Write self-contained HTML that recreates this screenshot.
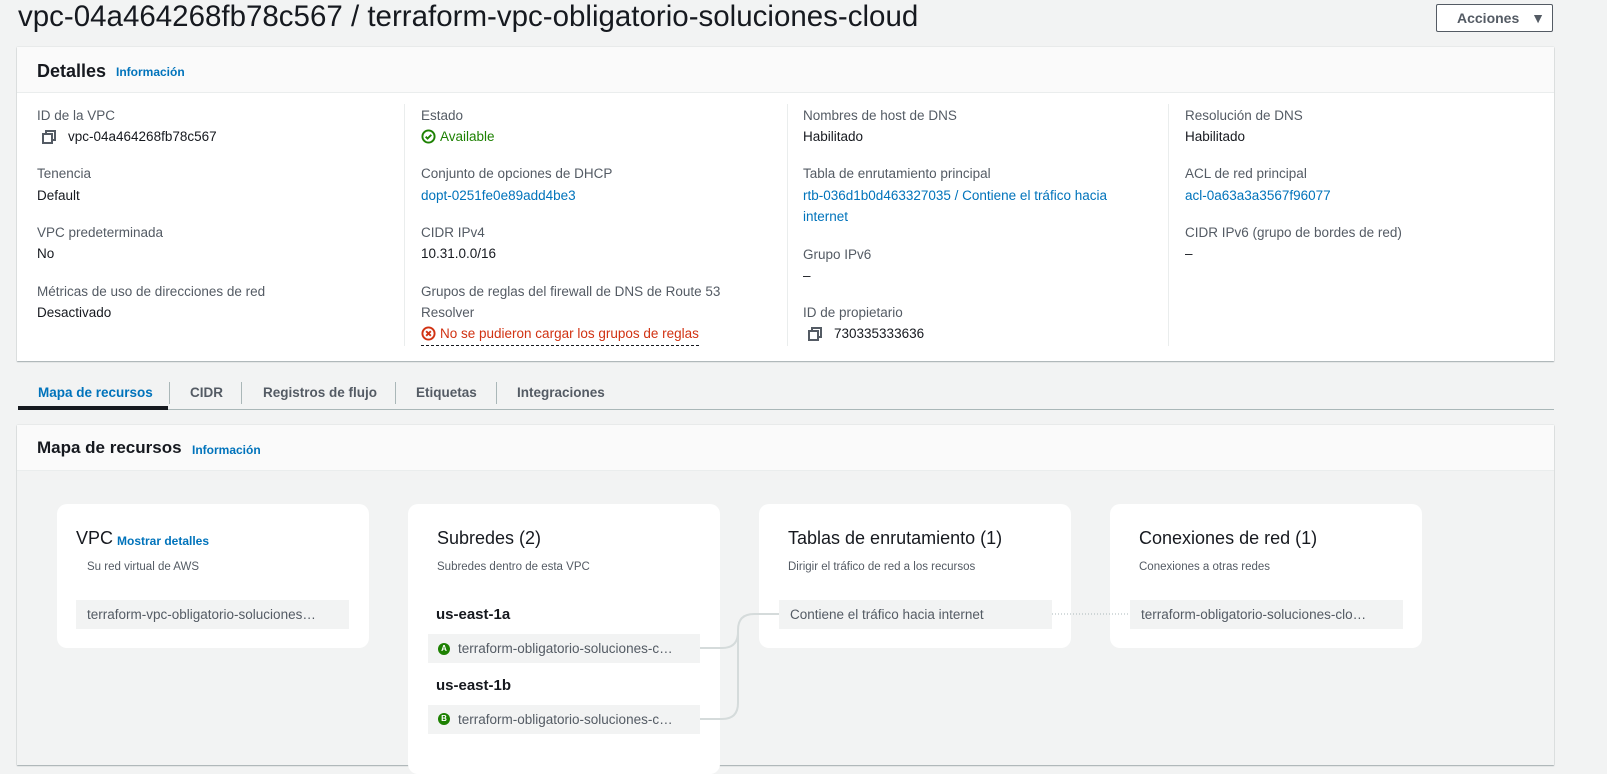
<!DOCTYPE html>
<html><head><meta charset="utf-8"><style>
*{margin:0;padding:0;box-sizing:border-box}
body{width:1607px;height:759px;overflow:hidden;background:#f2f3f3;font-family:"Liberation Sans",sans-serif;color:#16191f;position:relative}
.t{position:absolute;white-space:nowrap;font-size:13.5px;line-height:18px}
.l{color:#545b64}
.a{color:#0073bb}
.b{font-weight:bold}
.card{position:absolute;background:#fff;box-shadow:0 1px 1px rgba(0,28,36,.3),0 0 1px rgba(0,28,36,.2)}
.hd{position:absolute;left:0;right:0;top:0;height:46px;background:#fafafa;border-bottom:1px solid #eaeded}
.vd{position:absolute;width:1px;background:#eaeded;top:57px;height:242px}
.mc{position:absolute;background:#fff;border-radius:10px}
.pill{position:absolute;background:#f2f3f3;height:29px;font-size:13.5px;line-height:29px;color:#16191f;white-space:nowrap;overflow:hidden;padding-left:11px}
</style></head><body>
<div class="t" style="left:18px;top:0px;font-size:29.5px;line-height:34px;color:#16191f">vpc-04a464268fb78c567 / terraform-vpc-obligatorio-soluciones-cloud</div>
<div style="position:absolute;left:1436px;top:4px;width:117px;height:28px;border:1px solid #545b64;border-radius:2px;background:#fff;font-size:14px;font-weight:bold;color:#545b64;line-height:26px;padding-left:20px">Acciones <span style="font-size:14px;margin-left:8px">&#9660;</span></div>

<div class="card" style="left:17px;top:47px;width:1537px;height:314px">
 <div class="hd"></div>
 <div class="t b" style="left:20px;top:13px;font-size:18px;line-height:22px">Detalles</div>
 <div class="t a b" style="left:99px;top:16px;font-size:12px">Información</div>
 <div class="vd" style="left:387px"></div><div class="vd" style="left:770px"></div><div class="vd" style="left:1151px"></div>
</div>
<svg style="position:absolute;left:42px;top:130px" width="14" height="14" viewBox="0 0 14 14" fill="none" stroke="#545b64" stroke-width="2"><rect x="1" y="4" width="9" height="9"/><path d="M4 4V1h9v9h-3"/></svg>
<svg style="position:absolute;left:808px;top:327px" width="14" height="14" viewBox="0 0 14 14" fill="none" stroke="#545b64" stroke-width="2"><rect x="1" y="4" width="9" height="9"/><path d="M4 4V1h9v9h-3"/></svg>
<div class="t l" style="left:37px;top:107px">ID de la VPC</div>
<div class="t" style="left:68px;top:128px">vpc-04a464268fb78c567</div>
<div class="t l" style="left:37px;top:165px">Tenencia</div>
<div class="t" style="left:37px;top:187px">Default</div>
<div class="t l" style="left:37px;top:224px">VPC predeterminada</div>
<div class="t" style="left:37px;top:245px">No</div>
<div class="t l" style="left:37px;top:283px">Métricas de uso de direcciones de red</div>
<div class="t" style="left:37px;top:304px">Desactivado</div>

<div class="t l" style="left:421px;top:107px">Estado</div>
<svg style="position:absolute;left:421px;top:129px" width="15" height="15" viewBox="0 0 16 16" fill="none" stroke="#1d8102" stroke-width="2"><circle cx="8" cy="8" r="6.5"/><path d="M5 8.2l2 2 4-4"/></svg>
<div class="t" style="left:440px;top:128px;color:#1d8102">Available</div>
<div class="t l" style="left:421px;top:165px">Conjunto de opciones de DHCP</div>
<div class="t a" style="left:421px;top:187px">dopt-0251fe0e89add4be3</div>
<div class="t l" style="left:421px;top:224px">CIDR IPv4</div>
<div class="t" style="left:421px;top:245px">10.31.0.0/16</div>
<div class="t l" style="left:421px;top:283px">Grupos de reglas del firewall de DNS de Route 53</div>
<div class="t l" style="left:421px;top:304px">Resolver</div>
<div class="t" style="left:421px;top:325px;color:#d13212;border-bottom:1px dashed #16191f;padding-bottom:2px;padding-left:19px">No se pudieron cargar los grupos de reglas</div>
<svg style="position:absolute;left:421px;top:326px" width="15" height="15" viewBox="0 0 16 16" fill="none" stroke="#d13212" stroke-width="2"><circle cx="8" cy="8" r="6.5"/><path d="M5.5 5.5l5 5M10.5 5.5l-5 5"/></svg>

<div class="t l" style="left:803px;top:107px">Nombres de host de DNS</div>
<div class="t" style="left:803px;top:128px">Habilitado</div>
<div class="t l" style="left:803px;top:165px">Tabla de enrutamiento principal</div>
<div class="t a" style="left:803px;top:187px">rtb-036d1b0d463327035 / Contiene el tráfico hacia</div>
<div class="t a" style="left:803px;top:208px">internet</div>
<div class="t l" style="left:803px;top:246px">Grupo IPv6</div>
<div class="t" style="left:803px;top:267px">–</div>
<div class="t l" style="left:803px;top:304px">ID de propietario</div>
<div class="t" style="left:834px;top:325px">730335333636</div>

<div class="t l" style="left:1185px;top:107px">Resolución de DNS</div>
<div class="t" style="left:1185px;top:128px">Habilitado</div>
<div class="t l" style="left:1185px;top:165px">ACL de red principal</div>
<div class="t a" style="left:1185px;top:187px">acl-0a63a3a3567f96077</div>
<div class="t l" style="left:1185px;top:224px">CIDR IPv6 (grupo de bordes de red)</div>
<div class="t" style="left:1185px;top:245px">–</div>

<div style="position:absolute;left:18px;top:409px;width:1536px;height:1px;background:#aab7b8"></div>
<div style="position:absolute;left:18px;top:406px;width:150px;height:4px;background:#16191f"></div>
<div class="t b a" style="left:38px;top:384px;font-size:13.5px">Mapa de recursos</div>
<div style="position:absolute;left:169px;top:382px;width:1px;height:22px;background:#aab7b8"></div>
<div class="t b l" style="left:190px;top:384px;font-size:13.5px">CIDR</div>
<div style="position:absolute;left:241px;top:382px;width:1px;height:22px;background:#aab7b8"></div>
<div class="t b l" style="left:263px;top:384px;font-size:13.5px">Registros de flujo</div>
<div style="position:absolute;left:395px;top:382px;width:1px;height:22px;background:#aab7b8"></div>
<div class="t b l" style="left:416px;top:384px;font-size:13.5px">Etiquetas</div>
<div style="position:absolute;left:496px;top:382px;width:1px;height:22px;background:#aab7b8"></div>
<div class="t b l" style="left:517px;top:384px;font-size:13.5px">Integraciones</div>

<div class="card" style="left:17px;top:425px;width:1537px;height:340px;background:#f2f3f3">
 <div class="hd"></div>
 <div class="t b" style="left:20px;top:12px;font-size:17px;line-height:22px">Mapa de recursos</div>
 <div class="t a b" style="left:175px;top:16px;font-size:12px">Información</div>
</div>

<div class="mc" style="left:57px;top:504px;width:312px;height:144px"></div>
<div class="t" style="left:76px;top:528px;font-size:18px;line-height:20px">VPC</div>
<div class="t a b" style="left:117px;top:532px;font-size:12px">Mostrar detalles</div>
<div class="t l" style="left:87px;top:558px;font-size:11.5px">Su red virtual de AWS</div>
<div class="pill" style="left:76px;top:600px;width:273px;color:#545b64">terraform-vpc-obligatorio-soluciones…</div>

<div class="mc" style="left:408px;top:504px;width:312px;height:270px"></div>
<div class="t" style="left:437px;top:528px;font-size:18px;line-height:20px">Subredes (2)</div>
<div class="t l" style="left:437px;top:558px;font-size:11.5px">Subredes dentro de esta VPC</div>
<div class="t b" style="left:436px;top:606px;font-size:15px">us-east-1a</div>
<div class="pill" style="left:428px;top:634px;width:272px;padding-left:30px;color:#545b64">terraform-obligatorio-soluciones-c…</div>
<div style="position:absolute;left:438px;top:643px;width:12px;height:12px;border-radius:50%;background:#1d8102;color:#fff;font-size:8px;font-weight:bold;text-align:center;line-height:12px">A</div>
<div class="t b" style="left:436px;top:677px;font-size:15px">us-east-1b</div>
<div class="pill" style="left:428px;top:705px;width:272px;padding-left:30px;color:#545b64">terraform-obligatorio-soluciones-c…</div>
<div style="position:absolute;left:438px;top:713px;width:12px;height:12px;border-radius:50%;background:#1d8102;color:#fff;font-size:8px;font-weight:bold;text-align:center;line-height:12px">B</div>

<div class="mc" style="left:759px;top:504px;width:312px;height:144px"></div>
<div class="t" style="left:788px;top:528px;font-size:18px;line-height:20px">Tablas de enrutamiento (1)</div>
<div class="t l" style="left:788px;top:558px;font-size:11.5px">Dirigir el tráfico de red a los recursos</div>
<div class="pill" style="left:779px;top:600px;width:273px;color:#545b64">Contiene el tráfico hacia internet</div>

<div class="mc" style="left:1110px;top:504px;width:312px;height:144px"></div>
<div class="t" style="left:1139px;top:528px;font-size:18px;line-height:20px">Conexiones de red (1)</div>
<div class="t l" style="left:1139px;top:558px;font-size:11.5px">Conexiones a otras redes</div>
<div class="pill" style="left:1130px;top:600px;width:273px;color:#545b64">terraform-obligatorio-soluciones-clo…</div>

<svg style="position:absolute;left:0;top:0" width="1607" height="759" fill="none">
<path d="M700 648H722Q738 648 738 632V630Q738 614 754 614H779" stroke="#d5dbdb" stroke-width="2"/>
<path d="M700 719H722Q738 719 738 703V630" stroke="#d5dbdb" stroke-width="2"/>
<path d="M1052 614H1130" stroke="#aab7b8" stroke-width="1" stroke-dasharray="1 2"/>
</svg>
</body></html>
